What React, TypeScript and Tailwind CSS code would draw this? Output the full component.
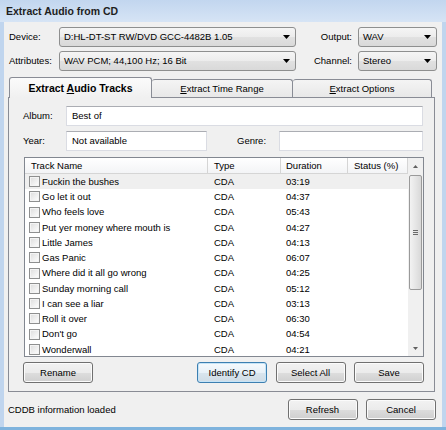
const tracks: [string, string][] = [
  ["Fuckin the bushes", "03:19"],
  ["Go let it out", "04:37"],
  ["Who feels love", "05:43"],
  ["Put yer money where mouth is", "04:27"],
  ["Little James", "04:13"],
  ["Gas Panic", "06:07"],
  ["Where did it all go wrong", "04:25"],
  ["Sunday morning call", "05:12"],
  ["I can see a liar", "03:13"],
  ["Roll it over", "06:30"],
  ["Don't go", "04:54"],
  ["Wonderwall", "04:21"],
];

function Arrow() {
  return (
    <svg width="7" height="4" viewBox="0 0 7 4" aria-hidden>
      <path d="M0 0h7L3.5 4z" fill="#000" />
    </svg>
  );
}

function Combo({ value, className = "" }: { value: string; className?: string }) {
  return (
    <div
      className={`flex h-[20px] items-center justify-between rounded-[3px] border border-[#8e8f8f] bg-[linear-gradient(#f5f5f5,#ececec_50%,#e1e1e1_51%,#d9d9d9)] pl-[4px] pr-[5px] ${className}`}
    >
      <span className="whitespace-nowrap">{value}</span>
      <Arrow />
    </div>
  );
}

function Btn({ label, primary = false }: { label: string; primary?: boolean }) {
  return (
    <div
      className={`flex h-[21px] w-[70px] items-center justify-center rounded-[3px] border ${
        primary
          ? "border-[#3c7fb1] bg-[linear-gradient(#f6fafd,#e8f1f8_50%,#d9e5ee_51%,#cfdce6)] shadow-[inset_0_0_0_1px_#c6e4f7]"
          : "border-[#707070] bg-[linear-gradient(#f2f2f2,#ebebeb_50%,#dddddd_51%,#cfcfcf)] shadow-[inset_0_0_0_1px_#fbfbfb]"
      }`}
    >
      {label}
    </div>
  );
}

function TextBox({ value = "", className = "" }: { value?: string; className?: string }) {
  return (
    <div
      className={`flex h-[20px] items-center border border-[#dadce3] border-t-[#abadb3] bg-white pl-[5px] ${className}`}
    >
      {value}
    </div>
  );
}

function Check() {
  return (
    <span className="block h-[11px] w-[11px] shrink-0 border border-[#8e8f8f] bg-[linear-gradient(135deg,#dcdcdc,#ffffff)] shadow-[inset_0_0_0_1px_#f4f4f4]" />
  );
}

export default function App() {
  return (
    <div className="flex h-[430px] w-[446px] flex-col overflow-hidden border-b-[3px] border-[#7fb3dd] bg-[#c0d5ee] font-['Liberation_Sans',Arial,sans-serif] text-[9.5px] leading-none text-black">
      {/* Title bar */}
      <div className="flex h-[22px] shrink-0 items-center bg-[linear-gradient(180deg,#c2d6ef,#d6e4f5)] pl-[6px] text-[10.5px] font-bold text-[#1e1e1e]">
        Extract Audio from CD
      </div>

      {/* Body */}
      <div className="mx-[4px] flex flex-1 flex-col bg-[#f0f0f0] pt-[5px]">
        {/* Device / Attributes */}
        <div className="grid grid-cols-[50px_237px_1fr_79px] gap-y-[4px] pl-[5px] pr-[5px]">
          <div className="flex items-center">Device:</div>
          <Combo value="D:HL-DT-ST RW/DVD GCC-4482B 1.05" />
          <div className="flex items-center justify-end pr-[6px]">Output:</div>
          <Combo value="WAV" />
          <div className="flex items-center">Attributes:</div>
          <Combo value="WAV PCM; 44,100 Hz; 16 Bit" />
          <div className="flex items-center justify-end pr-[6px]">Channel:</div>
          <Combo value="Stereo" />
        </div>

        {/* Tabs */}
        <div className="relative z-10 -mb-px ml-[5px] mt-[6px] flex h-[21px] items-end">
          <div className="flex h-[21px] w-[143px] items-center justify-center rounded-t-[3px] border border-b-0 border-[#898c95] bg-[linear-gradient(#fbfbfb,#f0f0f0)] text-[10.5px] font-bold">
            <span>
              Extract <span className="underline">A</span>udio Tracks
            </span>
          </div>
          <div className="mb-px flex h-[18px] w-[141px] items-center justify-center rounded-t-[3px] border border-b-0 border-l-0 border-[#898c95] bg-[linear-gradient(#f4f4f4,#e8e8e8)]">
            <span>
              <span className="underline">E</span>xtract Time Range
            </span>
          </div>
          <div className="mb-px flex h-[18px] w-[139px] items-center justify-center rounded-t-[3px] border border-b-0 border-l-0 border-[#898c95] bg-[linear-gradient(#f4f4f4,#e8e8e8)]">
            <span>
              <span className="underline">E</span>xtract Options
            </span>
          </div>
        </div>

        {/* Panel */}
        <div className="ml-[4px] mr-[7px] flex h-[295px] flex-col border border-[#898c95] bg-[#f0f0f0] pl-[14px] pr-[10px] pt-[8px]">
          <div className="flex items-center">
            <span className="w-[43px]">Album:</span>
            <TextBox value="Best of" className="mr-px flex-1" />
          </div>
          <div className="mt-[5px] flex items-center">
            <span className="w-[43px]">Year:</span>
            <TextBox value="Not available" className="w-[141px]" />
            <span className="ml-[30px] w-[42px]">Genre:</span>
            <TextBox className="mr-px flex-1" />
          </div>

          {/* Track list */}
          <div className="ml-px mt-[6px] flex h-[200px] overflow-hidden border border-[#828790] bg-white">
            <div className="flex flex-1 flex-col">
              <div className="grid h-[16px] shrink-0 grid-cols-[183px_73px_67px_60px] border-b border-[#d5d5d5] bg-[linear-gradient(#ffffff,#f3f4f6)]">
                <div className="flex items-center border-r border-[#d5d5d5] pl-[6px]">Track Name</div>
                <div className="flex items-center border-r border-[#d5d5d5] pl-[6px]">Type</div>
                <div className="flex items-center border-r border-[#d5d5d5] pl-[5px]">Duration</div>
                <div className="flex items-center border-r border-[#d5d5d5] pl-[6px]">Status (%)</div>
              </div>
              {tracks.map(([name, dur], i) => (
                <div
                  key={name}
                  className={`grid h-[15.25px] shrink-0 grid-cols-[183px_73px_67px_60px] ${i === 0 ? "bg-[#efefef]" : ""}`}
                >
                  <div className="flex items-center gap-[2px] pl-[4px]">
                    <Check />
                    <span className="whitespace-nowrap">{name}</span>
                  </div>
                  <div className="flex items-center pl-[6px]">CDA</div>
                  <div className="flex items-center pl-[5px]">{dur}</div>
                  <div />
                </div>
              ))}
            </div>

            {/* Scrollbar */}
            <div className="flex w-[15px] shrink-0 flex-col bg-[#f0f0f0]">
              <div className="flex h-[16px] items-center justify-center">
                <svg width="5" height="3" viewBox="0 0 5 3" aria-hidden>
                  <path d="M2.5 0L5 3H0z" fill="#606060" />
                </svg>
              </div>
              <div className="mx-px mt-px flex h-[115px] items-center justify-center rounded-[2px] border border-[#9a9a9a] bg-[linear-gradient(90deg,#f2f2f2,#e6e6e6_50%,#d8d8d8)]">
                <div className="flex flex-col gap-[1px]">
                  <span className="block h-px w-[5px] bg-[#6a6a6a]" />
                  <span className="block h-px w-[5px] bg-[#6a6a6a]" />
                  <span className="block h-px w-[5px] bg-[#6a6a6a]" />
                </div>
              </div>
              <div className="flex-1" />
              <div className="flex h-[16px] items-center justify-center">
                <svg width="5" height="3" viewBox="0 0 5 3" aria-hidden>
                  <path d="M0 0h5L2.5 3z" fill="#606060" />
                </svg>
              </div>
            </div>
          </div>

          {/* Panel buttons */}
          <div className="mt-[5px] flex items-center">
            <Btn label="Rename" />
            <div className="ml-auto flex gap-[8.5px]">
              <Btn label="Identify CD" primary />
              <Btn label="Select All" />
              <Btn label="Save" />
            </div>
          </div>
        </div>

        {/* Bottom */}
        <div className="mt-[7px] flex items-center pl-[4px] pr-[6px]">
          <span>CDDB information loaded</span>
          <div className="ml-auto flex gap-[8.5px]">
            <Btn label="Refresh" />
            <Btn label="Cancel" />
          </div>
        </div>
      </div>
    </div>
  );
}
